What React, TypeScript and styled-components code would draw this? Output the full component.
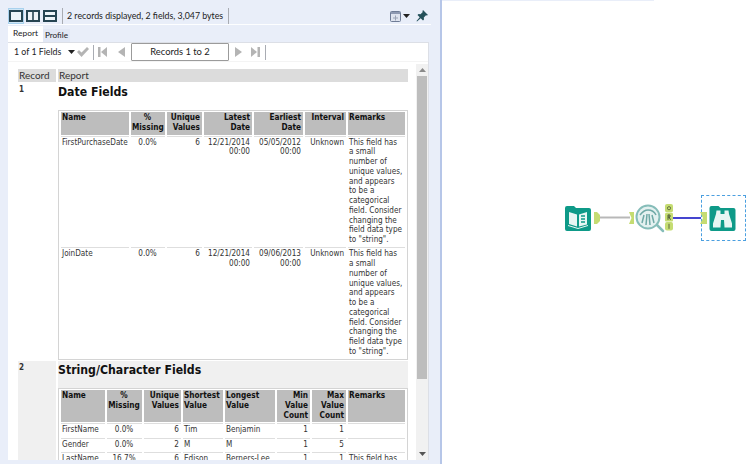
import React from "react";
import styled, { createGlobalStyle } from "styled-components";

const Global = createGlobalStyle`
  html, body { margin: 0; padding: 0; background: #fff; }
  #root { width: 756px; height: 464px; overflow: hidden; }
`;

const uiFont = `Lato, "Noto Sans", sans-serif`;
const dataFont = `"DejaVu Sans Condensed", "DejaVu Sans", sans-serif`;

const Page = styled.div`
  display: flex;
  width: 756px;
  height: 464px;
  overflow: hidden;
`;
const LeftPanel = styled.div`
  width: 440px;
  flex: none;
  height: 464px;
  background: #e9eef9;
  display: flex;
  flex-direction: column;
  padding-top: 8px;
  box-sizing: border-box;
`;
const Divider = styled.div`
  width: 2px;
  flex: none;
  background: #b6c6e8;
`;
const Toolbar = styled.div`
  display: flex;
  align-items: center;
  height: 16px;
  margin-left: 8px;
  margin-right: 8px;
`;
const ToolButton = styled.button<{ $active?: boolean }>`
  width: 16px;
  height: 16px;
  padding: 0;
  margin-right: 1px;
  border: 1px solid ${(p) => (p.$active ? "#a9d2ee" : "transparent")};
  background: ${(p) => (p.$active ? "#cfe6f6" : "transparent")};
  display: flex;
  align-items: center;
  justify-content: center;
  box-sizing: border-box;
`;
const Sep = styled.span<{ $h?: number; $m?: number }>`
  display: block;
  flex: none;
  width: 1px;
  height: ${(p) => p.$h ?? 16}px;
  background: #a9acb3;
  margin: 0 ${(p) => p.$m ?? 3}px;
`;
const Status = styled.span`
  font: 8.8px/16px ${uiFont};
  color: #222;
  white-space: nowrap;
  margin-left: 1px;
  width: 158px;
`;
const Spacer = styled.div`
  flex: 1;
`;
const ToolRule = styled.div`
  height: 1px;
  margin: 0 9px 0 8px;
  background: #fdfeff;
`;
const Tabs = styled.div`
  display: flex;
  align-items: flex-end;
  height: 17px;
  margin-left: 8px;
`;
const Tab = styled.div<{ $active?: boolean }>`
  font: ${(p) => (p.$active ? "8.4px" : "8.2px")}/${(p) => (p.$active ? 15 : 13)}px ${uiFont};
  color: #222;
  width: ${(p) => (p.$active ? "35px" : "27px")};
  background: ${(p) => (p.$active ? "#fff" : "#e2e8f5")};
  text-align: center;
  white-space: nowrap;
  height: ${(p) => (p.$active ? 16 : 13)}px;
`;
const Panel = styled.div`
  width: 421px;
  margin-left: 8px;
  height: 418px;
  background: #fff;
  border-top: 1px solid #dcdfe6;
  border-right: 1px solid #dcdfe6;
  display: flex;
  flex-direction: column;
  box-sizing: border-box;
`;
const Controls = styled.div`
  display: flex;
  align-items: center;
  height: 18px;
  border-bottom: 1px solid #f4f4f4;
  padding-left: 6px;
  flex: none;
`;
const FieldLabel = styled.span`
  font: 8.8px/18px ${uiFont};
  color: #222;
  white-space: nowrap;
  width: 54px;
`;
const Pager = styled.div`
  width: 98px;
  height: 18px;
  box-sizing: border-box;
  border: 1px solid #9b9b9b;
  border-radius: 1px;
  font: 9.4px/16px ${uiFont};
  color: #222;
  text-align: center;
  margin: 0 6px;
`;
const ControlIcon = styled.svg`
  display: block;
  flex: none;
`;
const Gap = styled.span<{ $w: number }>`
  display: block;
  flex: none;
  width: ${(p) => p.$w}px;
`;
const Body = styled.div`
  flex: 1;
  display: flex;
  min-height: 0;
`;
const Report = styled.div`
  flex: 1;
  overflow: hidden;
  padding: 7px 0 0 10px;
  display: grid;
  grid-template-columns: 38px 350px;
  grid-auto-rows: min-content;
  column-gap: 2px;
  row-gap: 1px;
`;
const HeadCell = styled.div`
  background: #dcdcdc;
  height: 13px;
  font: 10px/13px ${uiFont};
  color: #333;
  padding-left: 1px;
`;
const RecordNo = styled.div<{ $shade?: boolean }>`
  background: ${(p) => (p.$shade ? "#f0f0f0" : "#fff")};
  font: bold 8px/12px ${dataFont};
  color: #333;
  padding-left: 1px;
  padding-top: 1px;
`;
const ReportCell = styled.div<{ $shade?: boolean }>`
  background: ${(p) => (p.$shade ? "#f0f0f0" : "#fff")};
`;
const Heading = styled.h2`
  margin: 0;
  height: 27px;
  font: bold 12.2px/19px ${dataFont};
  color: #111;
`;
const Table = styled.table`
  table-layout: fixed;
  width: 350px;
  border-collapse: separate;
  border-spacing: 2px 1px;
  background: #fff;
  border: 1px solid #d4d4d4;
`;
const Th = styled.th<{ $align: string }>`
  background: #bdbdbd;
  text-align: ${(p) => p.$align};
  vertical-align: top;
  font: bold 8.2px/9.75px ${dataFont};
  color: #111;
  padding: 1px 2px 2px 1px;
  overflow: hidden;
`;
const Td = styled.td<{ $align: string }>`
  text-align: ${(p) => p.$align};
  vertical-align: top;
  font: 8.1px/9.75px ${dataFont};
  color: #333;
  padding: 1px 2px 1.5px 1px;
  border-top: 1px solid #dedede;
`;
const Scrollbar = styled.div`
  width: 12px;
  margin-top: 2px;
  flex: none;
  background: #f1f1f1;
  display: flex;
  flex-direction: column;
  align-items: center;
`;
const ScrollArrow = styled.div`
  height: 12px;
  width: 100%;
  display: flex;
  align-items: center;
  justify-content: center;
  flex: none;
`;
const ScrollThumb = styled.div`
  width: 10px;
  height: 303px;
  background: #bdbdbd;
  flex: none;
`;
const ScrollRest = styled.div`
  flex: 1;
`;
const Canvas = styled.div`
  position: relative;
  flex: 1;
  height: 464px;
  background: #fff;
`;
const TopRule = styled.div`
  width: 212px;
  height: 1px;
  background: #e9eef9;
`;
const Node = styled.svg<{ $x: number; $y: number }>`
  position: absolute;
  left: ${(p) => p.$x - 442}px;
  top: ${(p) => p.$y}px;
  display: block;
  overflow: visible;
`;
const Selection = styled.div`
  position: absolute;
  left: ${701 - 442}px;
  top: 195px;
  width: 43px;
  height: 44px;
  border: 1px dashed #4a9fe0;
`;

const LayoutIcon = ({ kind }: { kind: "single" | "cols" | "rows" }) => (
  <svg width="14" height="14" viewBox="0 0 14 14">
    <rect x="1" y="2" width="12" height="10" fill="#eef4f8" stroke="#274552" strokeWidth="2" />
    {kind === "cols" && <line x1="7" y1="2" x2="7" y2="12" stroke="#274552" strokeWidth="1.6" />}
    {kind === "rows" && <line x1="1" y1="7" x2="13" y2="7" stroke="#274552" strokeWidth="2" />}
  </svg>
);

const Caret = ({ color = "#222" }: { color?: string }) => (
  <ControlIcon width="7" height="4" viewBox="0 0 7 4">
    <path d="M0 0h7L3.500 4z" fill={color} />
  </ControlIcon>
);

const First = () => (
  <ControlIcon width="9" height="10" viewBox="0 0 9 10">
    <rect x="0" y="0" width="2.500" height="10" fill="#b4b4b4" />
    <path d="M9 0v10L3 5z" fill="#b4b4b4" />
  </ControlIcon>
);
const Prev = () => (
  <ControlIcon width="7" height="10" viewBox="0 0 7 10">
    <path d="M7 0v10L0 5z" fill="#b4b4b4" />
  </ControlIcon>
);
const Next = () => (
  <ControlIcon width="7" height="10" viewBox="0 0 7 10">
    <path d="M0 0v10L7 5z" fill="#b4b4b4" />
  </ControlIcon>
);
const Last = () => (
  <ControlIcon width="9" height="10" viewBox="0 0 9 10">
    <path d="M0 0v10L6 5z" fill="#b4b4b4" />
    <rect x="6.500" y="0" width="2.500" height="10" fill="#b4b4b4" />
  </ControlIcon>
);

type Cell = { t: string; a?: string };
const remark = `This field has a small number of unique values, and appears to be a categorical field. Consider changing the field data type to "string".`;

const dateCols = [68, 34, 35, 48, 49, 41, 57];
const dateHead: Cell[] = [
  { t: "Name", a: "left" },
  { t: "% Missing", a: "center" },
  { t: "Unique Values", a: "right" },
  { t: "Latest Date", a: "right" },
  { t: "Earliest Date", a: "right" },
  { t: "Interval", a: "right" },
  { t: "Remarks", a: "left" },
];
const dateRows = [
  ["FirstPurchaseDate", "0.0%", "6", "12/21/2014 00:00", "05/05/2012 00:00", "Unknown", remark],
  ["JoinDate", "0.0%", "6", "12/21/2014 00:00", "09/06/2013 00:00", "Unknown", remark],
];

const strCols = [44, 35, 37, 40, 50, 33, 34, 57];
const strHead: Cell[] = [
  { t: "Name", a: "left" },
  { t: "% Missing", a: "center" },
  { t: "Unique Values", a: "right" },
  { t: "Shortest Value", a: "left" },
  { t: "Longest Value", a: "left" },
  { t: "Min Value Count", a: "right" },
  { t: "Max Value Count", a: "right" },
  { t: "Remarks", a: "left" },
];
const strRows = [
  ["FirstName", "0.0%", "6", "Tim", "Benjamin", "1", "1", ""],
  ["Gender", "0.0%", "2", "M", "M", "1", "5", ""],
  ["LastName", "16.7%", "6", "Edison", "Berners-Lee", "1", "1", "This field has"],
];

const DataTable = ({ cols, head, rows }: { cols: number[]; head: Cell[]; rows: string[][] }) => (
  <Table>
    <colgroup>
      {cols.map((w, i) => (
        <col key={i} style={{ width: w }} />
      ))}
    </colgroup>
    <thead>
      <tr>
        {head.map((h) => (
          <Th key={h.t} $align={h.a ?? "left"}>
            {h.t}
          </Th>
        ))}
      </tr>
    </thead>
    <tbody>
      {rows.map((r) => (
        <tr key={r[0]}>
          {r.map((c, i) => (
            <Td key={i} $align={i === 1 ? "center" : head[i].a ?? "left"}>
              {c || "\u00a0"}
            </Td>
          ))}
        </tr>
      ))}
    </tbody>
  </Table>
);

const Folder = () => (
  <path d="M0 3a2 2 0 0 1 2-2h7l2 2h13a2 2 0 0 1 2 2v19a2 2 0 0 1-2 2H2a2 2 0 0 1-2-2z" fill="#0e9a88" />
);

export default function App() {
  return (
    <Page>
      <Global />
      <LeftPanel>
        <Toolbar>
          <ToolButton $active>
            <LayoutIcon kind="single" />
          </ToolButton>
          <ToolButton>
            <LayoutIcon kind="cols" />
          </ToolButton>
          <ToolButton>
            <LayoutIcon kind="rows" />
          </ToolButton>
          <Sep />
          <Status>2 records displayed, 2 fields, 3,047 bytes</Status>
          <Sep />
          <Spacer />
          <ControlIcon width="11" height="11" viewBox="0 0 11 11">
            <rect x="0.500" y="0.500" width="10" height="10" rx="1" fill="#dfe4ef" stroke="#6f7c96" />
            <rect x="1" y="1" width="9" height="2" fill="#8f9ab2" />
            <path d="M5.500 4.500v5M3 7h5" stroke="#9aa3b5" />
          </ControlIcon>
          <Gap $w={2} />
          <Caret />
          <Gap $w={6} />
          <ControlIcon width="12" height="12" viewBox="0 0 12 12">
            <path d="M7 0l5 5-1.200 .6-.8-.4-2.200 2.400.2 2-1 1-2.300-2.400L1 11.500l-.5-.5L3.700 7.300 1.500 5l1-1 2 .2L6.800 2l-.4-.8z" fill="#24505a" />
          </ControlIcon>
          <Gap $w={4} />
        </Toolbar>
        <ToolRule />
        <Tabs>
          <Tab $active>Report</Tab>
          <Tab>Profile</Tab>
        </Tabs>
        <Panel>
          <Controls>
            <FieldLabel>1 of 1 Fields</FieldLabel>
            <Caret />
            <Gap $w={2} />
            <ControlIcon width="12" height="10" viewBox="0 0 12 10">
              <path d="M0 5l2-2 2.500 2.500L10 0l2 2-7.500 8z" fill="#b4b4b4" />
            </ControlIcon>
            <Sep $h={15} $m={4} />
            <First />
            <Gap $w={11} />
            <Prev />
            <Pager>Records 1 to 2</Pager>
            <Next />
            <Gap $w={9} />
            <Last />
            <Sep $h={15} $m={5} />
          </Controls>
          <Body>
            <Report>
              <HeadCell>Record</HeadCell>
              <HeadCell>Report</HeadCell>
              <RecordNo>1</RecordNo>
              <ReportCell>
                <Heading>Date Fields</Heading>
                <DataTable cols={dateCols} head={dateHead} rows={dateRows} />
              </ReportCell>
              <RecordNo $shade>2</RecordNo>
              <ReportCell $shade>
                <Heading>String/Character Fields</Heading>
                <DataTable cols={strCols} head={strHead} rows={strRows} />
              </ReportCell>
            </Report>
            <Scrollbar>
              <ScrollArrow>
                <ControlIcon width="7" height="4" viewBox="0 0 7 4">
                  <path d="M0 4h7L3.500 0z" fill="#8a8a8a" />
                </ControlIcon>
              </ScrollArrow>
              <ScrollThumb />
              <ScrollRest />
              <ScrollArrow>
                <Caret color="#555" />
              </ScrollArrow>
            </Scrollbar>
          </Body>
        </Panel>
      </LeftPanel>
      <Divider />
      <Canvas>
        <TopRule />
        <Selection />
        <Node $x={594} $y={200} width="115" height="36" viewBox="594 200 115 36">
          <line x1="600" y1="217.500" x2="630" y2="217.500" stroke="#b8b8b8" strokeWidth="2" />
          <line x1="672" y1="218" x2="701" y2="218" stroke="#4545cf" strokeWidth="2" />
          <path d="M594 212h3l3 3v6l-3 3h-3z" fill="#c5dc72" />
          <path d="M629 212h5v12h-5l2.500-6z" fill="#c5dc72" />
          <path d="M700 212h7v12h-7l3-6z" fill="#c5dc72" />
        </Node>
        <Node $x={565} $y={205} width="26" height="26" viewBox="0 0 26 26">
          <Folder />
          <path d="M4 7l8 2.500v12L4 19zM22 7l-8 2.500v12l8-2z" fill="#e8f6f3" />
          <path d="M16 11h4M16 14h4M16 17h4" stroke="#0e9a88" strokeWidth="1.400" />
          <path d="M3 20.500l10 3 10-3" fill="none" stroke="#e8f6f3" strokeWidth="1" />
        </Node>
        <Node $x={635} $y={202} width="32" height="32" viewBox="0 0 32 32">
          <circle cx="13" cy="15" r="11.500" fill="#e4f1f0" stroke="#86bdb9" strokeWidth="2" />
          <path d="M5 13c3-4 6-5 8-5s6 1 8 5" fill="none" stroke="#6fa9a6" strokeWidth="1.500" />
          <path d="M7 21l2-8M11 23l1-11M15 23l-1-11M19 21l-2-8" stroke="#6fa9a6" strokeWidth="1.500" />
          <path d="M22 23l6 6" stroke="#86bdb9" strokeWidth="2.500" strokeLinecap="round" />
        </Node>
        <Node $x={665} $y={204} width="9" height="27" viewBox="0 0 9 27">
          <rect x="0" y="0" width="8" height="8.500" rx="2" fill="#c5dc72" />
          <rect x="0" y="9" width="8" height="8.500" rx="1" fill="#c5dc72" />
          <rect x="0" y="18" width="8" height="8.500" rx="2" fill="#c5dc72" />
          <circle cx="4" cy="4.200" r="1.600" fill="none" stroke="#5c6a3c" strokeWidth="0.900" />
          <path d="M3 10.800v5M3 11h2v2H3M4 13l1.500 2.800" fill="none" stroke="#3c4a2c" strokeWidth="0.900" />
          <path d="M4 19.800v5" stroke="#5c6a3c" strokeWidth="1" />
        </Node>
        <Node $x={709} $y={205} width="27" height="26" viewBox="0 0 26 26">
          <Folder />
          <path d="M7 5.500h4v3.500h4V5.500h4l.5 3.500 3 9.500v4h-7.500l-.5-7.500h-3l-.5 7.500H3.500v-4l3-9.500z" fill="#e8f6f3" />
        </Node>
      </Canvas>
    </Page>
  );
}
